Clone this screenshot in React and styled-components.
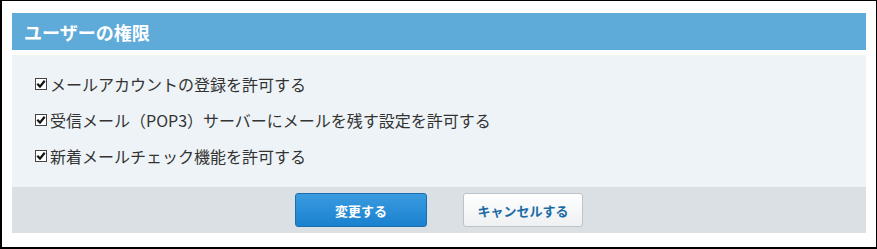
import React from "react";
import styled, { createGlobalStyle } from "styled-components";

const Global = createGlobalStyle`
  html, body { margin: 0; padding: 0; background: #fff; }
  body { font-family: "Noto Sans CJK JP", "Noto Sans", sans-serif; }
  * { box-sizing: border-box; }
`;

const Frame = styled.div`
  width: 877px;
  height: 249px;
  border-top: 1px solid #000;
  border-left: 2px solid #000;
  border-right: 1px solid #000;
  border-bottom: 2px solid #000;
  padding: 12px 10px 0 10px;
  background: #fff;
`;

const Header = styled.div`
  height: 37px;
  background: #5eaad9;
  color: #fff;
  font-weight: bold;
  font-size: 18px;
  display: flex;
  align-items: center;
  padding-left: 12px;
`;

const Body = styled.div`
  margin-top: 5px;
  height: 132px;
  background: #eef3f7;
  padding: 11px 0 0 23px;
  display: flex;
  flex-direction: column;
`;

const Row = styled.label`
  height: 36px;
  display: flex;
  align-items: center;
  font-size: 16px;
  color: #333;
  line-height: 1;
`;

const Box = styled.span`
  width: 12px;
  height: 12px;
  border: 1px solid #444;
  background: #fff;
  display: inline-flex;
  align-items: center;
  justify-content: center;
  margin-right: 3px;
  flex: none;
`;

const Footer = styled.div`
  height: 46px;
  background: #dbe0e4;
  display: flex;
  align-items: center;
  justify-content: center;
  gap: 36px;
`;

const Button = styled.button`
  height: 34px;
  width: ${(p) => p.$w}px;
  border-radius: 3px;
  font-family: inherit;
  font-weight: bold;
  font-size: 13px;
  cursor: pointer;
  padding: 0;
  border: 1px solid ${(p) => (p.$primary ? "#1b6fae" : "#bcc4c9")};
  color: ${(p) => (p.$primary ? "#fff" : "#1a6aa6")};
  background: ${(p) =>
    p.$primary
      ? "linear-gradient(#3a9ce0, #1a81cf)"
      : "linear-gradient(#ffffff, #eef0f1)"};
`;

const Check = () => (
  <Box>
    <svg width="10" height="10" viewBox="0 0 10 10">
      <path d="M1.3 4.8 L4 7.6 L8.7 1.8" fill="none" stroke="#111" strokeWidth="2.2" />
    </svg>
  </Box>
);

const items = [
  "メールアカウントの登録を許可する",
  "受信メール（POP3）サーバーにメールを残す設定を許可する",
  "新着メールチェック機能を許可する",
];

export default function App() {
  return (
    <>
      <Global />
      <Frame>
        <Header>ユーザーの権限</Header>
        <Body>
          {items.map((t) => (
            <Row key={t}>
              <Check />
              {t}
            </Row>
          ))}
        </Body>
        <Footer>
          <Button $primary $w={132}>変更する</Button>
          <Button $w={120}>キャンセルする</Button>
        </Footer>
      </Frame>
    </>
  );
}
